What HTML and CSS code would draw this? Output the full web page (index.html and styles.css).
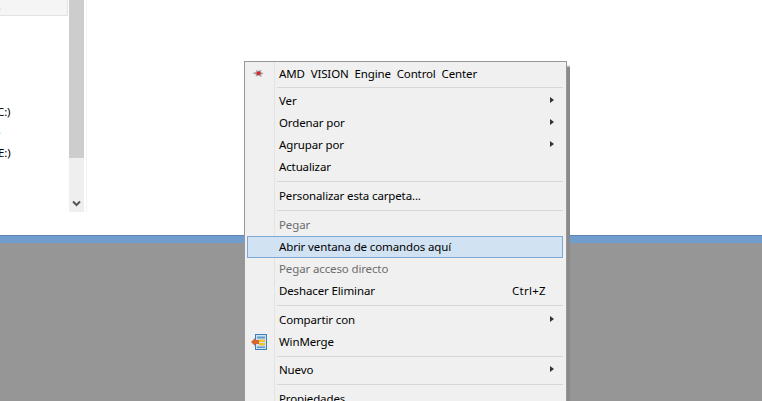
FILE: index.html
```html
<!DOCTYPE html>
<html lang="es">
<head>
<meta charset="utf-8">
<title>Menú contextual</title>
<link rel="stylesheet" href="styles.css">
</head>
<body>
<div class="desktop">
  <div class="window">
    <div class="sidebar">
      <div class="tree">
        <div class="tree-top"><span class="tree-dot">s</span></div>
        <div class="drive drive-c">C:)</div>
        <div class="tree-mark">.</div>
        <div class="drive drive-e">E:)</div>
      </div>
      <div class="scrollbar">
        <div class="thumb"></div>
        <div class="track">
          <svg class="chev" width="9" height="7" viewBox="0 0 9 7"><path d="M1 1.5 L4.5 5 L8 1.5" fill="none" stroke="#555" stroke-width="2"/></svg>
        </div>
      </div>
    </div>
  </div>
  <div class="strip"></div>
  <div class="ground"></div>

  <div class="menu">
    <div class="item"><span class="icon">
      <svg width="13" height="9" viewBox="0 0 15 11"><path d="M0 5 L5 3.5 L4 1 L7.5 2.5 L11 1 L10.5 4 L14 5 L11 7 L11 10 L7.5 8 L4 9.5 L4.5 7 Z" fill="#aaa3a3"/><path d="M5 4.5 L8 2.5 L10.5 5 L8.5 7.5 L5.5 7 Z" fill="#d8252b"/></svg>
    </span><span class="label spaced">AMD VISION Engine Control Center</span></div>
    <div class="sep tight"></div>
    <div class="item"><span class="label">Ver</span><i class="arrow"></i></div>
    <div class="item"><span class="label">Ordenar por</span><i class="arrow"></i></div>
    <div class="item"><span class="label">Agrupar por</span><i class="arrow"></i></div>
    <div class="item"><span class="label">Actualizar</span></div>
    <div class="sep"></div>
    <div class="item"><span class="label">Personalizar esta carpeta...</span></div>
    <div class="sep"></div>
    <div class="item disabled"><span class="label">Pegar</span></div>
    <div class="item active"><span class="label">Abrir ventana de comandos aquí</span></div>
    <div class="item disabled"><span class="label">Pegar acceso directo</span></div>
    <div class="item"><span class="label">Deshacer Eliminar</span><span class="shortcut">Ctrl+Z</span></div>
    <div class="sep"></div>
    <div class="item"><span class="label">Compartir con</span><i class="arrow"></i></div>
    <div class="item"><span class="icon">
      <svg width="16" height="16" viewBox="0 0 16 16"><rect x="4.5" y="0.5" width="11" height="15" fill="#cfe2f3" stroke="#3d7fb5"/><rect x="6" y="2.5" width="8" height="2" fill="#5b9bd0"/><rect x="8" y="5.5" width="6" height="2.5" fill="#f2c230"/><rect x="8" y="9" width="6" height="2.5" fill="#f2c230"/><rect x="6" y="12.5" width="8" height="1.5" fill="#5b9bd0"/><path d="M0 8 L4 4 L4 6 L8 6 L8 10 L4 10 L4 12 Z" fill="#d9662a"/></svg>
    </span><span class="label">WinMerge</span></div>
    <div class="sep tight"></div>
    <div class="item"><span class="label">Nuevo</span><i class="arrow"></i></div>
    <div class="sep"></div>
    <div class="item"><span class="label">Propiedades</span></div>
  </div>
</div>
</body>
</html>
```
FILE: styles.css
```css
html, body {
  margin: 0;
  padding: 0;
  height: 100%;
  overflow: hidden;
}
.desktop {
  position: relative;
  width: 762px;
  height: 401px;
  display: flex;
  flex-direction: column;
  overflow: hidden;
  background: #969696;
  font-family: "Noto Sans", "Open Sans", sans-serif;
  font-size: 11.5px;
  letter-spacing: -0.13px;
  color: #000;
}
.window {
  height: 235px;
  background: #fff;
  flex: none;
}
.sidebar {
  display: flex;
  width: 87px;
  height: 212px;
  border-right: 1px solid #f4f4f4;
  box-sizing: border-box;
}
.tree {
  position: relative;
  width: 69px;
  flex: none;
  overflow: hidden;
}
.tree-top {
  height: 15px;
  width: 67px;
  background: #f5f5f5;
  border: solid #e2e2e2;
  border-width: 0 1px 1px 0;
  color: #3aa0e8;
  line-height: 14px;
  text-indent: -5px;
}
.drive {
  position: absolute;
  left: -3px;
  line-height: 16px;
}
.drive-c { top: 104px; }
.drive-e { top: 145px; left: -2px; }
.tree-mark {
  position: absolute;
  left: -2px;
  top: 123px;
  color: #4fd8f0;
  line-height: 14px;
}
.scrollbar {
  width: 15px;
  flex: none;
  display: flex;
  flex-direction: column;
  background: #efefef;
}
.thumb {
  height: 158px;
  background: #cdcdcd;
}
.track {
  flex: 1;
  display: flex;
  align-items: flex-end;
  justify-content: center;
  padding-bottom: 5px;
}
.strip {
  height: 8px;
  flex: none;
  background: #709cce;
  border-top: 1px solid #5f86b4;
  box-sizing: border-box;
}
.ground {
  flex: 1;
  background: #969696;
}
.menu {
  position: absolute;
  left: 244px;
  top: 61px;
  width: 323px;
  box-sizing: border-box;
  padding: 0 3px 0 2px;
  background: #f0f0f0;
  border: 1px solid #979797;
  box-shadow: 3px 3px 1px -0.5px #8a8a8a;
}
.menu::before {
  content: "";
  position: absolute;
  left: 29px;
  top: 0;
  bottom: 0;
  width: 1px;
  background: #e2e3e3;
}
.item {
  position: relative;
  display: flex;
  align-items: center;
  height: 22px;
  box-sizing: border-box;
  padding-left: 32px;
  padding-bottom: 2px;
  white-space: nowrap;
}
.icon {
  position: absolute;
  left: 0;
  top: 0;
  bottom: 0;
  width: 23px;
  display: flex;
  align-items: center;
  justify-content: center;
}
.label {
  flex: 1;
}
.spaced {
  word-spacing: 3px;
  margin-top: 2px;
}
.arrow {
  position: absolute;
  right: 9px;
  top: 7px;
  width: 0;
  height: 0;
  border-left: 4px solid #333;
  border-top: 3.5px solid transparent;
  border-bottom: 3.5px solid transparent;
}
.shortcut {
  position: absolute;
  right: 17px;
  letter-spacing: 0.3px;
}
.disabled {
  color: #6d6d6d;
}
.active {
  background: #d1e2f2;
  border: 1px solid #7da7d9;
  padding-left: 31px;
}
.sep {
  height: 1px;
  margin: 3px 0 3px 30px;
  background: #d7d7d7;
  position: relative;
}
.tight {
  margin-bottom: 2px;
}
```
